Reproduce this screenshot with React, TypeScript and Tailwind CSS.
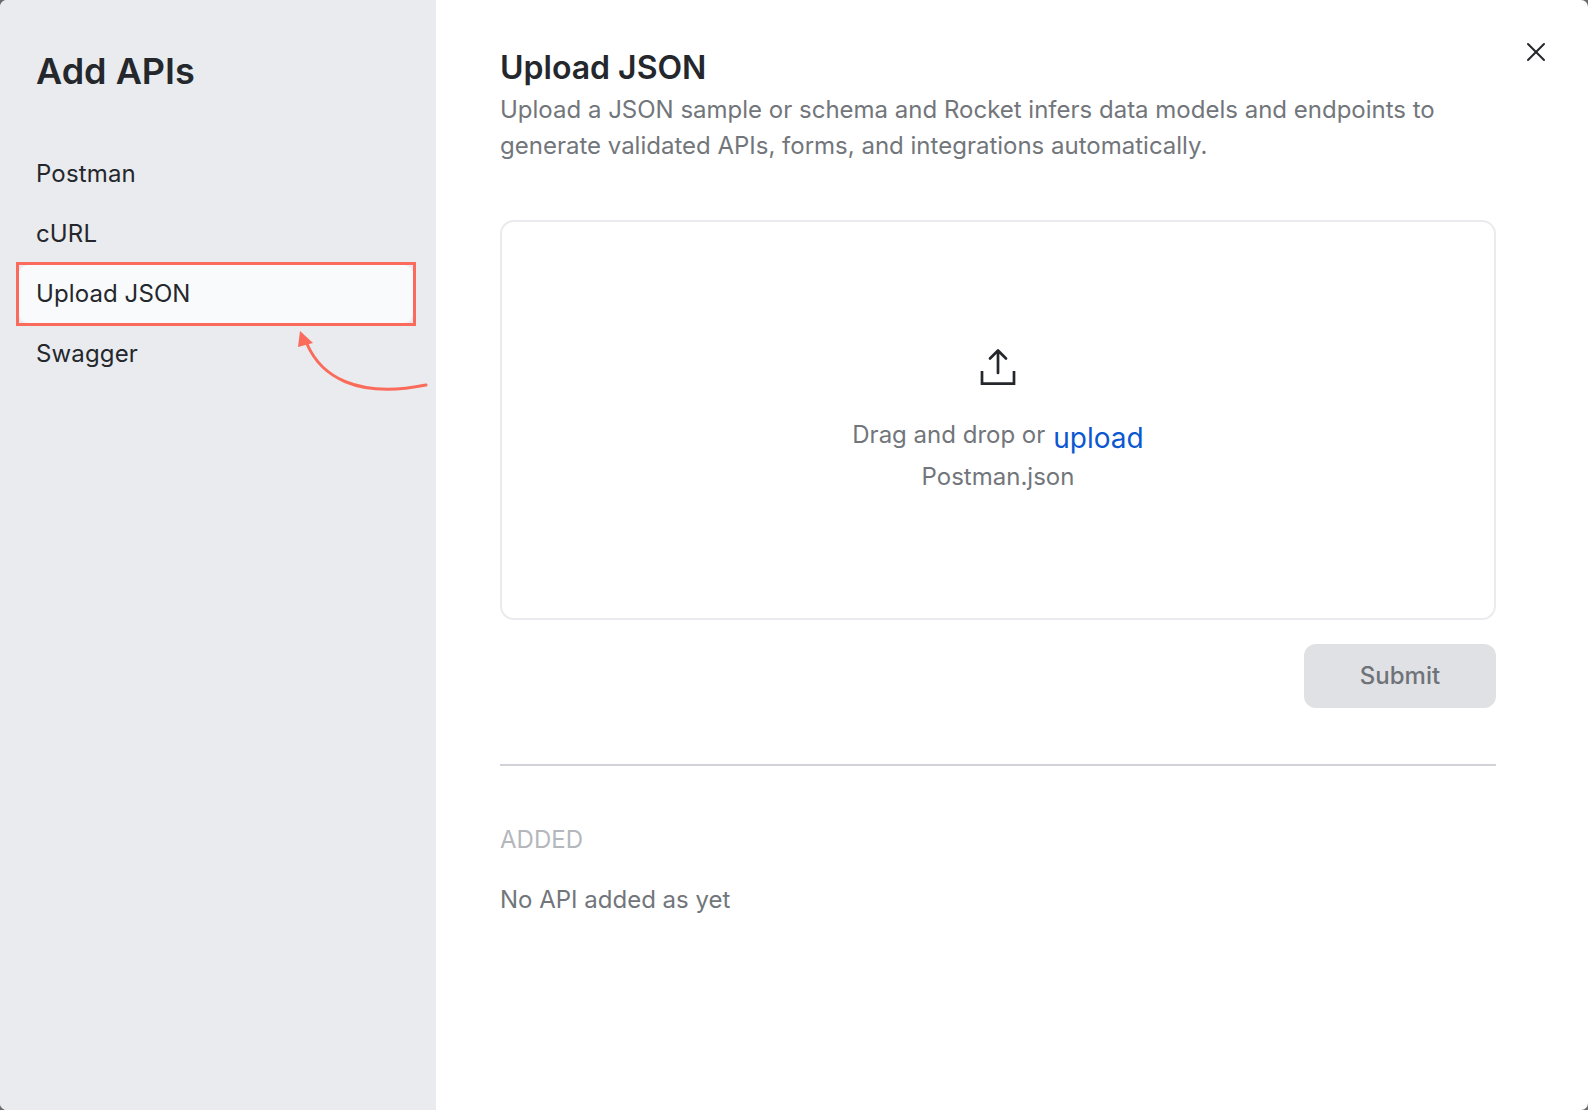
import React from 'react';
import { X } from 'lucide-react';

const SOURCES = ['Postman', 'cURL', 'Upload JSON', 'Swagger'];

const UploadIcon = () => (
  <svg width="38" height="38" viewBox="0 0 38 38" fill="none" stroke="#24272c" strokeWidth="2.700">
    <path d="M19 25V3M11 10.500L19 2.500l8 8" strokeLinecap="round" strokeLinejoin="round" />
    <path d="M3 23v12.600h32V23" />
  </svg>
);

const CurvedArrow = () => (
  <svg className="absolute left-[296px] top-[330px]" width="136" height="64" viewBox="0 0 136 64" fill="none">
    <path d="M11 14C25 46 60 69 130 55" stroke="#fb6b5b" strokeWidth="3" strokeLinecap="round" />
    <path d="M4 1L2 17L17 13Z" fill="#fb6b5b" />
  </svg>
);

export default function App() {
  return (
    <div className="h-[1110px] w-[1588px] bg-[#6b6b6b]">
      <div className="relative flex h-[1110px] w-[1588px] overflow-hidden rounded-[7px] bg-white font-['Inter',sans-serif]">
        <aside className="w-[436px] shrink-0 bg-[#e9ebee] pl-4 pr-5">
          <h1 className="mt-[49px] pl-5 text-[36px] leading-[44px] font-semibold text-[#24272c]">Add APIs</h1>
          <nav className="mt-[51px] flex flex-col">
            {SOURCES.map((source) =>
              source === 'Upload JSON' ? (
                <div key={source} className="-my-[2px] h-[64px] border-[3px] border-[#fb6b5b]">
                  <div className="flex h-full items-center rounded-[9px] bg-[#f9fafb] pl-[17px] text-[24px] tracking-[0.1px] text-[#24272c]">
                    {source}
                  </div>
                </div>
              ) : (
                <div key={source} className="flex h-[60px] items-center pl-5 text-[24px] tracking-[0.15px] text-[#24272c]">
                  {source}
                </div>
              )
            )}
          </nav>
        </aside>
        <CurvedArrow />

        <main className="flex-1 pl-16 pr-[92px] pt-[47px]">
          <h2 className="text-[32px] leading-[42px] font-semibold text-[#24272c]">Upload JSON</h2>
          <p className="mt-[3px] text-[24px] leading-[36px] text-[#72767b]">
            Upload a JSON sample or schema and Rocket infers data models and endpoints to generate validated APIs, forms, and integrations automatically.
          </p>

          <div className="mt-[56px] flex h-[400px] flex-col items-center justify-center rounded-[14px] border-2 border-[#e9ebee] pt-[3px]">
            <UploadIcon />
            <div className="mt-[26px] flex items-baseline gap-2 text-[24px] text-[#72767b]">
              <span>Drag and drop or</span>
              <span className="relative top-[5px] text-[28px] text-[#0b57d0]">upload</span>
            </div>
            <div className="mt-[5px] text-[24px] leading-[36px] text-[#72767b]">Postman.json</div>
          </div>

          <div className="mt-6 flex justify-end">
            <button className="h-[64px] w-[192px] rounded-[12px] bg-[#dfe1e5] text-[24px] font-medium text-[#6f7378]">Submit</button>
          </div>

          <div className="mt-[56px] h-[2px] bg-[#d1d2d8]" />

          <div className="mt-[56px] text-[24px] leading-[36px] text-[#b4b7bc]">ADDED</div>
          <div className="mt-6 text-[24px] leading-[36px] text-[#72767b]">No API added as yet</div>
        </main>

        <X className="absolute right-[36px] top-[36px] h-[32px] w-[32px] text-[#24272c]" strokeWidth={1.5} />
      </div>
    </div>
  );
}
